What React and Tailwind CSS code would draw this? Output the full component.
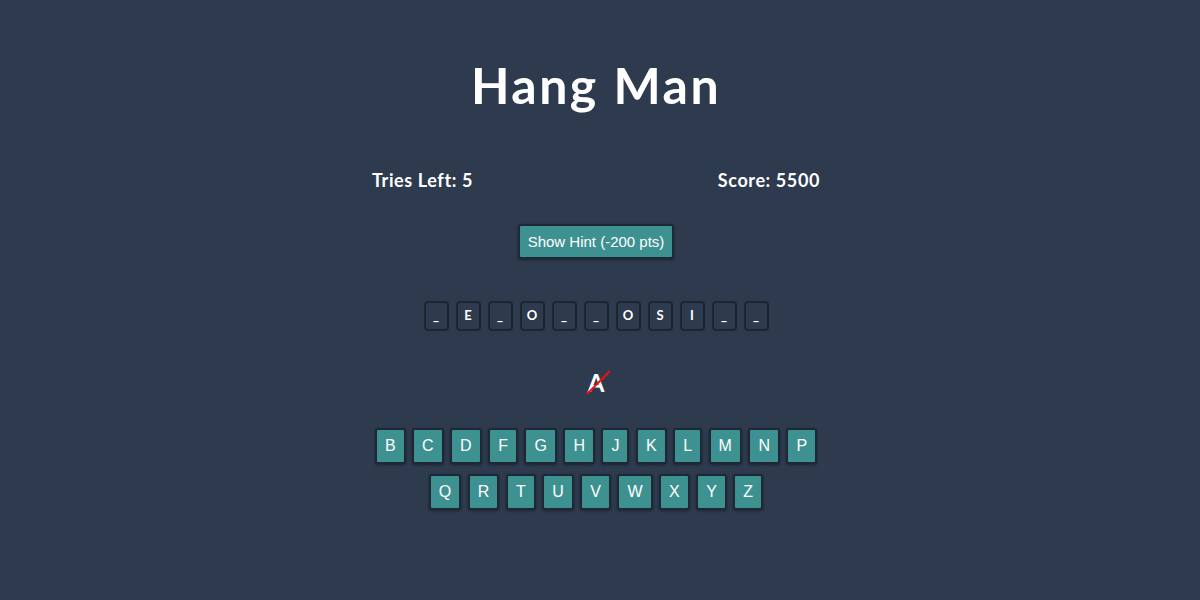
import React, { useState } from 'react';

const SHOWN = ['_', 'E', '_', 'O', '_', '_', 'O', 'S', 'I', '_', '_'];
const ALPHABET = 'ABCDEFGHIJKLMNOPQRSTUVWXYZ'.split('');

function App() {
  const [guessed] = useState(['A', 'E', 'O', 'S', 'I']);
  const [wrong] = useState(['A']);
  const [tries] = useState(5);
  const [score] = useState(5500);

  const remaining = ALPHABET.filter((l) => !guessed.includes(l));

  return (
    <div className="min-h-screen bg-[#2e3b4f] text-white pr-2 font-['Lato',sans-serif]">
      <div className="flex flex-col items-center pt-[52px]">
        <h1 className="text-[50px] font-bold leading-[66px] tracking-[2.5px]">Hang Man</h1>

        <div className="w-[448px] flex justify-between mt-[50px] text-[18px] font-bold leading-6 tracking-[0.6px]">
          <span>Tries Left: {tries}</span>
          <span>Score: {score}</span>
        </div>

        <button className="mt-[32px] bg-[#3e9191] border-2 border-[#1e2836] rounded-[3px] shadow-[0_1px_3px_rgba(0,0,0,0.4)] px-2 py-[6px] text-[15px] leading-[19px] font-['Liberation_Sans',sans-serif]">
          Show Hint (-200 pts)
        </button>

        <div className="flex gap-[7px] mt-[42px]">
          {SHOWN.map((ch, i) => (
            <div
              key={i}
              className="w-[25px] h-[30px] flex items-center justify-center border-2 border-[#1d2531] rounded-[4px] text-[13px] font-bold"
            >
              {ch}
            </div>
          ))}
        </div>

        <div className="flex gap-3 mt-[39px] h-[26px]">
          {wrong.map((l) => (
            <div key={l} className="relative text-[24px] font-bold leading-[26px]">
              {l}
              <svg className="absolute -left-[2px] top-0 w-[26px] h-[26px]" viewBox="0 0 26 26">
                <line x1="1" y1="24" x2="24" y2="1" stroke="#f01010" strokeWidth="2" />
              </svg>
            </div>
          ))}
        </div>

        <div className="max-w-[470px] flex flex-wrap justify-center gap-x-[6.5px] gap-y-[10px] mt-[32px] font-['Liberation_Sans',sans-serif]">
          {remaining.map((l) => (
            <button
              key={l}
              className="bg-[#3e9191] border-2 border-[#1e2836] rounded-[3px] shadow-[0_1px_3px_rgba(0,0,0,0.4)] px-2 py-1 text-[16px] leading-6"
            >
              {l}
            </button>
          ))}
        </div>
      </div>
    </div>
  );
}

export default App;
